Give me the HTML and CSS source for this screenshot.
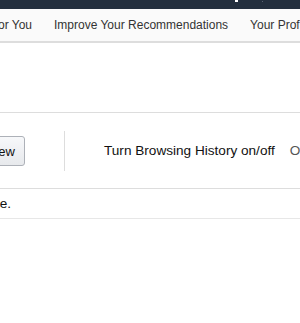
FILE: index.html
```html
<!DOCTYPE html>
<html>
<head>
<meta charset="utf-8">
<link rel="stylesheet" href="styles.css">
</head>
<body>
<div class="topbar"><span class="top-icon"></span><span class="top-dot"></span></div>
<nav class="nav">
  <div class="nav-first"><span>For You</span></div>
  <a class="nav-item">Improve Your Recommendations</a>
  <a class="nav-item">Your Profile</a>
</nav>
<div class="spacer"></div>
<div class="toolbar">
  <div class="clip"><button class="btn">Remove all items from view</button></div>
  <div class="divider"></div>
  <span class="toggle-label">Turn Browsing History on/off</span>
  <span class="toggle-state">Off</span>
</div>
<div class="note">
  <div class="clip"><span>There are no items in your browsing history to see.</span></div>
</div>
</body>
</html>
```
FILE: styles.css
```css
html, body {
  margin: 0;
  padding: 0;
  background: #fff;
  overflow: hidden;
}
body {
  width: 300px;
  height: 323px;
  font-family: "Liberation Sans", Arial, sans-serif;
  color: #111;
}
.topbar {
  height: 9px;
  background: #232f3e;
  display: flex;
  align-items: flex-start;
  padding-left: 235px;
  gap: 24px;
}
.top-icon {
  width: 3px;
  height: 2px;
  background: #fff;
}
.top-dot {
  width: 1px;
  height: 1px;
  margin-top: 1px;
  background: #5a6472;
}
.nav {
  height: 32px;
  background: #fafafa;
  border-bottom: 2px solid #dddddd;
  display: flex;
  align-items: center;
  white-space: nowrap;
  font-size: 12px;
  color: #333;
}
.nav-first {
  flex: none;
  width: 32px;
  overflow: hidden;
  display: flex;
  justify-content: flex-end;
}
.nav-first span {
  flex: none;
}
.nav-item {
  flex: none;
  margin-left: 22px;
}
.spacer {
  height: 69px;
}
.toolbar {
  border-top: 1px solid #dddddd;
  border-bottom: 1px solid #dddddd;
  height: 75px;
  display: flex;
  align-items: center;
  white-space: nowrap;
}
.clip {
  flex: none;
  overflow: hidden;
  display: flex;
  justify-content: flex-end;
}
.toolbar .clip {
  width: 25px;
}
.btn {
  flex: none;
  height: 30px;
  padding: 0 9px;
  border: 1px solid #adb1b8;
  border-radius: 3px;
  background: linear-gradient(#f7f8fa, #e7e9ec);
  font-family: inherit;
  font-size: 13px;
  color: #111;
  margin-top: 1px;
}
.divider {
  flex: none;
  width: 1px;
  height: 40px;
  background: #dddddd;
  margin-left: 39px;
}
.toggle-label {
  flex: none;
  margin-left: 39px;
  font-size: 13.6px;
  color: #111;
}
.toggle-state {
  flex: none;
  margin-left: 15px;
  font-size: 13.6px;
  color: #555;
}
.note {
  height: 29px;
  border-bottom: 1px solid #e7e7e7;
  display: flex;
  align-items: center;
  white-space: nowrap;
}
.note .clip {
  width: 11px;
  font-size: 13.6px;
  color: #111;
}
.note span {
  flex: none;
}
```
